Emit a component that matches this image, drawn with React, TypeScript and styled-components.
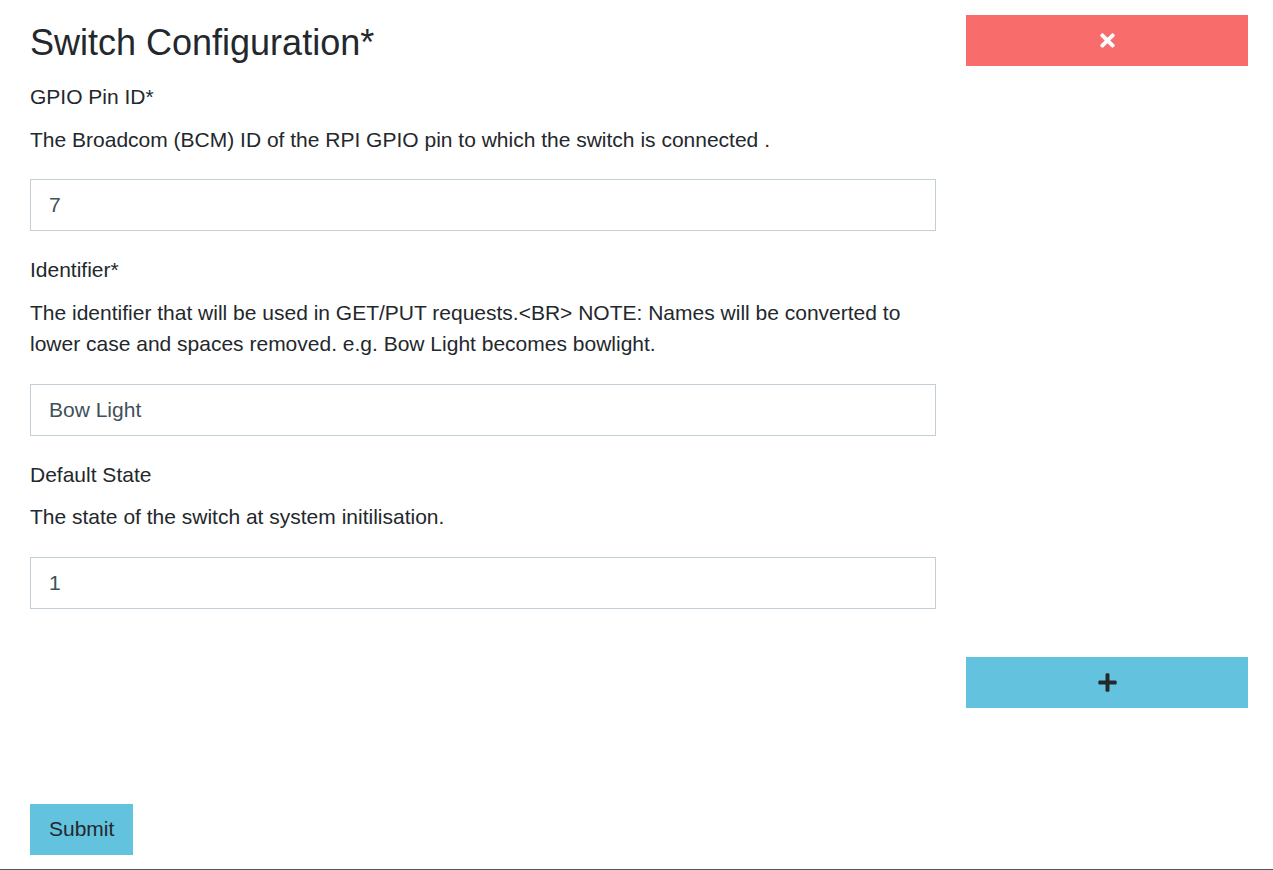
import styled, { createGlobalStyle } from "styled-components";
import { FaPlus, FaTimes } from "react-icons/fa";

type Field = {
  label: string;
  help: string;
  value: string;
};

const FIELDS: Field[] = [
  {
    label: "GPIO Pin ID*",
    help: "The Broadcom (BCM) ID of the RPI GPIO pin to which the switch is connected .",
    value: "7",
  },
  {
    label: "Identifier*",
    help: "The identifier that will be used in GET/PUT requests.<BR> NOTE: Names will be converted to lower case and spaces removed. e.g. Bow Light becomes bowlight.",
    value: "Bow Light",
  },
  {
    label: "Default State",
    help: "The state of the switch at system initilisation.",
    value: "1",
  },
];

const GlobalStyle = createGlobalStyle`
  * {
    box-sizing: border-box;
  }

  body {
    margin: 0;
    background: #fff;
    font-family: "Liberation Sans", Arial, sans-serif;
    color: #23282c;
  }
`;

const Page = styled.div`
  min-height: 100vh;
  padding: 15px 25px 0 30px;
  border-bottom: 1px solid #555;
`;

const Row = styled.div`
  display: grid;
  grid-template-columns: 1fr 282px;
  column-gap: 30px;
  align-items: start;
`;

const Form = styled.div`
  display: flex;
  flex-direction: column;
`;

const Title = styled.h1`
  margin: 6px 0 17px;
  font-size: 36px;
  font-weight: 400;
  line-height: 1.2;
`;

const Label = styled.label`
  font-size: 21px;
  line-height: 1.5;
  margin-bottom: 11px;
`;

const Help = styled.p`
  margin: 0 0 24px;
  font-size: 21px;
  line-height: 1.5;
`;

const Input = styled.input`
  height: 52px;
  margin-bottom: 23px;
  padding: 0 18px;
  border: 1px solid #c2cfd6;
  border-radius: 0;
  font-family: inherit;
  font-size: 21px;
  color: #3e515b;
  outline: none;
`;

const Button = styled.button<{ $tone: "danger" | "info" }>`
  display: flex;
  align-items: center;
  justify-content: center;
  height: 51px;
  border: 0;
  border-radius: 0;
  background: ${(p) => (p.$tone === "danger" ? "#f86c6b" : "#63c2de")};
  color: ${(p) => (p.$tone === "danger" ? "#fff" : "#23282c")};
  font-family: inherit;
  font-size: 21px;
  cursor: pointer;
`;

const AddRow = styled(Row)`
  margin-top: 25px;
`;

const Submit = styled(Button)`
  margin-top: 96px;
  padding: 0 19px;
`;

export default function App() {
  return (
    <>
      <GlobalStyle />
      <Page>
        <Row>
          <Form>
            <Title>Switch Configuration*</Title>
            {FIELDS.map((f) => (
              <Form key={f.label}>
                <Label>{f.label}</Label>
                <Help>{f.help}</Help>
                <Input defaultValue={f.value} />
              </Form>
            ))}
          </Form>
          <Button $tone="danger" aria-label="Remove">
            <FaTimes size={21} />
          </Button>
        </Row>
        <AddRow>
          <div />
          <Button $tone="info" aria-label="Add">
            <FaPlus size={21} />
          </Button>
        </AddRow>
        <Submit $tone="info">Submit</Submit>
      </Page>
    </>
  );
}
